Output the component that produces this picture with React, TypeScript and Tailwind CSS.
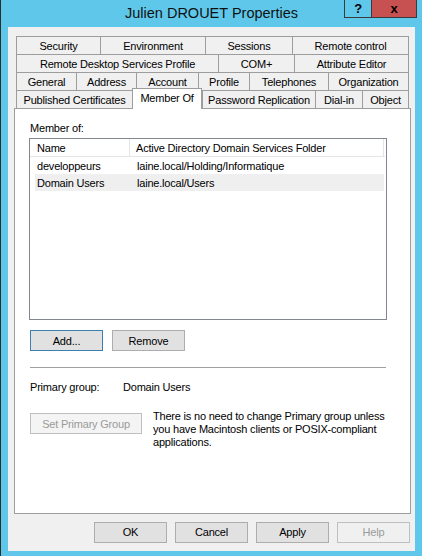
import React from "react";

const tabCls =
  "h-[18px] flex items-center justify-center border-t border-l border-[#9d9d9d] bg-[#f0f0f0] text-[11px] leading-none text-black whitespace-nowrap";

function Tab({ w, label, last }: { w: string; label: string; last?: boolean }) {
  return (
    <div className={`${tabCls} ${w} ${last ? "border-r" : ""}`}>
      <span className="pt-[1px]">{label}</span>
    </div>
  );
}

export default function App() {
  return (
    <div className="w-[422px] h-[556px] bg-[#5fc8ea] border-l border-[#2d2d2d] font-['Liberation_Sans',Arial,sans-serif] tracking-[-0.2px] text-black overflow-hidden flex flex-col">
      {/* Title bar */}
      <div className="h-[27px] grid grid-cols-[1fr_auto_1fr] items-start">
        <div />
        <div className="pt-[3px] text-[14.5px] leading-[20px] tracking-[0px] text-[#111]">Julien DROUET Properties</div>
        <div className="flex justify-end pr-[5px]">
          <div className="flex h-[18px] border border-t-0 border-[#3a3a3a]">
            <div className="w-[27px] flex items-center justify-center border-r border-[#3a3a3a] text-[13px] font-bold leading-none">
              ?
            </div>
            <div className="w-[44px] bg-[#c75050] flex items-center justify-center text-[13px] font-bold leading-none">
              x
            </div>
          </div>
        </div>
      </div>

      {/* Client area */}
      <div className="ml-[7px] w-[407px] h-[524px] bg-[#f0f0f0] flex flex-col">
        {/* Tabs */}
        <div className="ml-[8px] mt-[9px] flex flex-col w-[393px]">
          <div className="flex">
            <Tab w="w-[84px]" label="Security" />
            <Tab w="w-[105px]" label="Environment" />
            <Tab w="w-[87px]" label="Sessions" />
            <Tab w="w-[117px]" label="Remote control" last />
          </div>
          <div className="flex">
            <Tab w="w-[202px]" label="Remote Desktop Services Profile" />
            <Tab w="w-[76px]" label="COM+" />
            <Tab w="w-[115px]" label="Attribute Editor" last />
          </div>
          <div className="flex">
            <Tab w="w-[60px]" label="General" />
            <Tab w="w-[60px]" label="Address" />
            <Tab w="w-[62px]" label="Account" />
            <Tab w="w-[51px]" label="Profile" />
            <Tab w="w-[79px]" label="Telephones" />
            <Tab w="w-[81px]" label="Organization" last />
          </div>
          <div className="flex items-start h-[18px]">
            <Tab w="w-[116px]" label="Published Certificates" />
            <div className="relative z-10 -mt-[2px] h-[21px] w-[70px] flex items-start justify-center pt-[4px] bg-white border-t border-l border-r border-[#9d9d9d] text-[11px] leading-none whitespace-nowrap">
              Member Of
            </div>
            <Tab w="w-[113px]" label="Password Replication" />
            <Tab w="w-[47px]" label="Dial-in" />
            <Tab w="w-[47px]" label="Object" last />
          </div>
        </div>

        {/* Panel */}
        <div className="ml-[6px] w-[397px] h-[406px] bg-white border border-[#9d9d9d] flex flex-col pl-[14px] text-[11px] leading-[16px]">
          <div className="mt-[11px] ml-[1px]">Member of:</div>
          <div className="mt-[2px] w-[358px] h-[182px] border border-[#828790] bg-white flex flex-col">
            <div className="h-[18px] flex border-b border-[#e5e5e5] w-[355px]">
              <div className="w-[100px] border-r border-[#e5e5e5] pl-[7px] flex items-center">Name</div>
              <div className="w-[254px] border-r border-[#e5e5e5] pl-[6px] flex items-center whitespace-nowrap">
                Active Directory Domain Services Folder
              </div>
            </div>
            <div className="h-[17px] flex items-center">
              <div className="w-[100px] pl-[7px]">developpeurs</div>
              <div className="pl-[7px]">laine.local/Holding/Informatique</div>
            </div>
            <div className="h-[17px] flex items-center ml-[5px] w-[349px] bg-[#efefef]">
              <div className="w-[95px] pl-[2px]">Domain Users</div>
              <div className="pl-[7px]">laine.local/Users</div>
            </div>
          </div>

          <div className="mt-[10px] flex gap-[9px] ml-[1px]">
            <div className="w-[73px] h-[21px] flex items-center justify-center bg-[#e1e1e1] border border-[#3c7fb1]">
              Add...
            </div>
            <div className="w-[73px] h-[21px] flex items-center justify-center bg-[#e1e1e1] border border-[#adadad]">
              Remove
            </div>
          </div>

          <div className="mt-[16px] ml-[1px] w-[356px] h-px bg-[#a0a0a0]" />

          <div className="mt-[11px] ml-[1px] flex">
            <div className="w-[93px]">Primary group:</div>
            <div>Domain Users</div>
          </div>

          <div className="mt-[15px] ml-[1px] flex gap-[11px]">
            <div className="mt-[3px] w-[112px] h-[21px] flex items-center justify-center bg-[#f4f4f4] border border-[#bfbfbf] text-[#9a9a9a] whitespace-nowrap">
              Set Primary Group
            </div>
            <div className="leading-[13px] flex flex-col whitespace-nowrap">
              <span>There is no need to change Primary group unless</span>
              <span>you have Macintosh clients or POSIX-compliant</span>
              <span>applications.</span>
            </div>
          </div>
        </div>

        {/* Bottom buttons */}
        <div className="mt-[8px] flex justify-end gap-[8px] pr-[5px] text-[11px]">
          <div className="w-[73px] h-[21px] flex items-center justify-center bg-[#e1e1e1] border border-[#adadad]">OK</div>
          <div className="w-[73px] h-[21px] flex items-center justify-center bg-[#e1e1e1] border border-[#adadad]">Cancel</div>
          <div className="w-[73px] h-[21px] flex items-center justify-center bg-[#e1e1e1] border border-[#adadad]">Apply</div>
          <div className="w-[73px] h-[21px] flex items-center justify-center bg-[#f0f0f0] border border-[#bfbfbf] text-[#9a9a9a]">Help</div>
        </div>
      </div>
    </div>
  );
}
